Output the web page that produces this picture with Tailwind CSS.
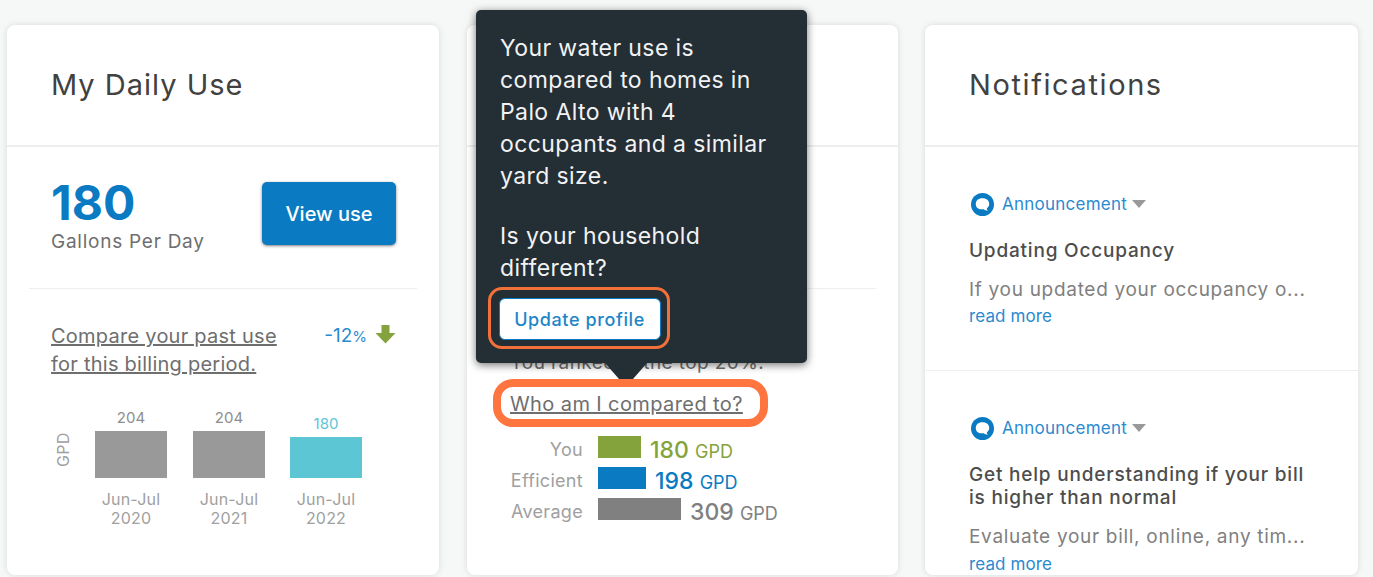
<!DOCTYPE html>
<html lang="en">

<head>
    <meta charset="UTF-8">
    <meta name="viewport" content="width=device-width, initial-scale=1.0">
    <script src="https://cdn.jsdelivr.net/npm/@tailwindcss/browser@4"></script>
    <title>Dashboard</title>
</head>

<body class="h-[577px] overflow-hidden bg-[#f6f8f8] font-['Inter',sans-serif] text-[#666]">
    <div class="flex gap-[28px] pl-[7px] pt-[25px]">

        <!-- my daily use -->
        <section class="h-[550px] w-[432px] rounded-lg bg-white shadow-[0_0_6px_rgba(0,0,0,0.12)]">
            <header class="flex h-[122px] items-center border-b-2 border-[#eeeeee] pl-[44px]">
                <h2 class="text-[29px] tracking-[1px] text-[#414141]">My Daily Use</h2>
            </header>
            <div class="mx-[22px] flex h-[142px] justify-between border-b border-[#eeeeee] pl-[22px] pr-[21px] pt-[31px]">
                <div>
                    <div class="text-[48px] leading-[50px] font-bold text-[#0a7bc2]">180</div>
                    <div class="mt-[1px] text-[19px] leading-[26px] tracking-[0.75px] text-[#6e6e6e]">Gallons Per Day</div>
                </div>
                <button class="mt-[4px] h-[63px] w-[134px] rounded-[5px] bg-[#0a7bc2] pt-[1px] text-[20px] font-medium text-white shadow-[0_1px_3px_rgba(0,0,0,0.5)]">View use</button>
            </div>
            <div class="flex justify-between pl-[44px] pr-[43px] pt-[33px]">
                <a href="#" class="text-[20px] leading-[28px] tracking-[0.25px] text-[#6e6e6e] underline">Compare your past use<br>for this billing period.</a>
                <div class="flex items-start gap-[8px]">
                    <span class="text-[19px] leading-[28px] text-[#2a8ad0]">-12<span class="text-[15px]">%</span></span>
                    <svg class="mt-[3px]" width="21" height="19" viewBox="0 0 21 19"><path d="M6.500 0H14.500V8H20.500L10.500 18.500L0.500 8H6.500Z" fill="#84a33c"/></svg>
                </div>
            </div>
            <div class="mt-[27px] flex pl-[44px]">
                <div class="mt-[26px] flex h-[47px] w-[44px] items-end self-start">
                    <span class="mb-[12px] ml-[-1px] block w-[26px] -rotate-90 text-[16px] tracking-[0.3px] text-[#a0a0a0]">GPD</span>
                </div>
                <div class="flex gap-[26px]">
                    <div class="flex w-[72px] flex-col items-center">
                        <div class="flex h-[73px] w-full flex-col justify-end">
                            <span class="text-center text-[15px] leading-[26px] text-[#8e8e8e]">204</span>
                            <div class="h-[47px] bg-[#999999]"></div>
                        </div>
                        <div class="mt-[12px] text-center text-[16px] leading-[19px] tracking-[0.2px] text-[#a0a0a0]">Jun-Jul<br>2020</div>
                    </div>
                    <div class="flex w-[72px] flex-col items-center">
                        <div class="flex h-[73px] w-full flex-col justify-end">
                            <span class="text-center text-[15px] leading-[26px] text-[#8e8e8e]">204</span>
                            <div class="h-[47px] bg-[#999999]"></div>
                        </div>
                        <div class="mt-[12px] text-center text-[16px] leading-[19px] tracking-[0.2px] text-[#a0a0a0]">Jun-Jul<br>2021</div>
                    </div>
                    <div class="-ml-px flex w-[72px] flex-col items-center">
                        <div class="flex h-[73px] w-full flex-col justify-end">
                            <span class="text-center text-[15px] leading-[26px] text-[#5cc6d5]">180</span>
                            <div class="h-[41px] bg-[#5cc6d5]"></div>
                        </div>
                        <div class="mt-[12px] text-center text-[16px] leading-[19px] tracking-[0.2px] text-[#a0a0a0]">Jun-Jul<br>2022</div>
                    </div>
                </div>
            </div>
        </section>

        <!-- compare card, mostly under the tooltip -->
        <section class="relative -mr-px h-[550px] w-[431px] rounded-lg bg-white shadow-[0_0_6px_rgba(0,0,0,0.12)]">
            <header class="h-[122px] border-b-2 border-[#eeeeee]"></header>
            <div class="mx-[22px] h-[142px] border-b border-[#eeeeee]"></div>
            <div class="pl-[43px] pt-[60px] text-[19px] leading-[27px] tracking-[0.4px] text-[#6e6e6e]">You ranked in the top 20%.</div>
            <div class="pl-[43px] pt-[15px]">
                <a href="#" class="text-[20px] leading-[27px] tracking-[0.4px] text-[#6e6e6e] underline">Who am I compared to?</a>
            </div>
            <div class="mt-[18px] flex flex-col gap-[9px]">
                <div class="flex h-[22px] items-center">
                    <span class="mt-[5px] w-[116px] text-right text-[18px] tracking-[0.3px] text-[#a0a0a0]">You</span>
                    <div class="ml-[15px] h-[22px] w-[43px] bg-[#84a33c]"></div>
                    <span class="ml-[9px] mt-[6px] text-[23px] font-medium text-[#84a33c]">180 <span class="text-[18px] font-normal">GPD</span></span>
                </div>
                <div class="flex h-[22px] items-center">
                    <span class="mt-[5px] w-[116px] text-right text-[18px] tracking-[0.3px] text-[#a0a0a0]">Efficient</span>
                    <div class="ml-[15px] h-[22px] w-[48px] bg-[#0a7bc2]"></div>
                    <span class="ml-[9px] mt-[6px] text-[23px] font-medium text-[#0a7bc2]">198 <span class="text-[18px] font-normal">GPD</span></span>
                </div>
                <div class="flex h-[22px] items-center">
                    <span class="mt-[5px] w-[116px] text-right text-[18px] tracking-[0.3px] text-[#a0a0a0]">Average</span>
                    <div class="ml-[15px] h-[22px] w-[83px] bg-[#808080]"></div>
                    <span class="ml-[9px] mt-[6px] text-[23px] font-medium text-[#808080]">309 <span class="text-[18px] font-normal">GPD</span></span>
                </div>
            </div>

            <!-- tooltip -->
            <div class="absolute left-[9px] top-[-15px] h-[353px] w-[331px] rounded-[5px] bg-[#242e35] pl-[24px] pr-[20px] pt-[22px] text-white shadow-[0_2px_8px_rgba(0,0,0,0.55)]">
                <p class="text-[23px] leading-[32px] tracking-[0.4px] text-[#f2f2f2]">Your water use is<br>compared to homes in<br>Palo Alto with 4<br>occupants and a similar<br>yard size.</p>
                <p class="mt-[28px] text-[23px] leading-[32px] tracking-[0.4px] text-[#f2f2f2]">Is your household<br>different?</p>
                <div class="absolute left-[12px] top-[277px] flex h-[62px] w-[182px] items-center justify-center rounded-[14px] border-[3px] border-[#f2703a] pl-[1px] pt-[2px]">
                    <button class="h-[42px] w-[162px] rounded-[6px] border-[1.5px] border-[#0a7bc2] bg-white text-[18px] font-medium tracking-[0.6px] text-[#1d86c8]">Update profile</button>
                </div>
                <div class="absolute left-[129px] top-[353px] size-0 border-x-[21px] border-t-[24px] border-x-transparent border-t-[#242e35]"></div>
            </div>

            <!-- highlight round the link -->
            <div class="absolute left-[26px] top-[354px] h-[48px] w-[275px] rounded-[20px] border-[8px] border-[#ff7540]"></div>
        </section>

        <!-- notifications -->
        <section class="h-[550px] w-[433px] overflow-hidden rounded-lg bg-white shadow-[0_0_6px_rgba(0,0,0,0.12)]">
            <header class="flex h-[122px] items-center border-b-2 border-[#eeeeee] pl-[44px]">
                <h2 class="text-[29px] tracking-[1.6px] text-[#414141]">Notifications</h2>
            </header>
            <article class="h-[224px] border-b border-[#eeeeee] pl-[44px] pr-[50px] pt-[45px]">
                <div class="flex h-[24px] items-center">
                    <svg class="ml-[2px]" width="23" height="23" viewBox="0 0 24 24"><circle cx="12" cy="12" r="12" fill="#0a7bc2"/><path d="M12 5.500C7.500 5.500 5 8 5 11.500C5 15 7.500 17 11 17C12 17 13 17 13.500 17C14.500 18 16 18.500 17.500 18.500C16.800 17.800 16.500 17 16.500 16C18 15 19 13.500 19 11.500C19 8 16.500 5.500 12 5.500Z" fill="white"/></svg>
                    <span class="ml-[8px] mt-[2px] text-[17px] tracking-[0.25px] text-[#2a8ad0]">Announcement</span>
                    <span class="ml-[5px] size-0 border-x-[7px] border-t-[8px] border-x-transparent border-t-[#999999]"></span>
                </div>
                <h3 class="mt-[23px] text-[19px] leading-[23px] font-medium tracking-[0.8px] text-[#4d4d4d]">Updating Occupancy</h3>
                <p class="mt-[16px] whitespace-nowrap text-[19px] leading-[24px] tracking-[0.7px] text-[#808080]">If you updated your occupancy o...</p>
                <a href="#" class="mt-[2px] block text-[17px] leading-[24px] tracking-[0.1px] text-[#2a8ad0]">read more</a>
            </article>
            <article class="pl-[44px] pr-[50px] pt-[45px]">
                <div class="flex h-[24px] items-center">
                    <svg class="ml-[2px]" width="23" height="23" viewBox="0 0 24 24"><circle cx="12" cy="12" r="12" fill="#0a7bc2"/><path d="M12 5.500C7.500 5.500 5 8 5 11.500C5 15 7.500 17 11 17C12 17 13 17 13.500 17C14.500 18 16 18.500 17.500 18.500C16.800 17.800 16.500 17 16.500 16C18 15 19 13.500 19 11.500C19 8 16.500 5.500 12 5.500Z" fill="white"/></svg>
                    <span class="ml-[8px] mt-[2px] text-[17px] tracking-[0.25px] text-[#2a8ad0]">Announcement</span>
                    <span class="ml-[5px] size-0 border-x-[7px] border-t-[8px] border-x-transparent border-t-[#999999]"></span>
                </div>
                <h3 class="mt-[23px] text-[19px] leading-[23px] font-medium tracking-[0.8px] text-[#4d4d4d]">Get help understanding if your bill<br>is higher than normal</h3>
                <p class="mt-[16px] whitespace-nowrap text-[19px] leading-[24px] tracking-[0.7px] text-[#808080]">Evaluate your bill, online, any tim...</p>
                <a href="#" class="mt-[3px] block text-[17px] leading-[24px] tracking-[0.1px] text-[#2a8ad0]">read more</a>
            </article>
        </section>
    </div>
</body>

</html>
